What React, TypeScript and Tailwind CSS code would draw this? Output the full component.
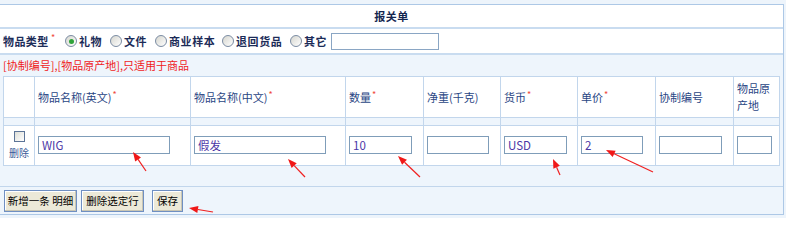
import React from "react";

const F = { fontFamily: '"Noto Sans CJK SC", "Liberation Sans", sans-serif' };

function Star() {
  return <span className="text-[#f04a3a] text-[9px] leading-none relative -top-[4px] ml-[1px]">*</span>;
}

function Radio({ checked, label, w }: { checked?: boolean; label: string; w: number }) {
  return (
    <span className="flex items-center shrink-0" style={{ width: w }}>
      <span className="w-[12px] h-[12px] rounded-full border border-[#7b8ca3] bg-gradient-to-br from-[#d6d6cf] to-white flex items-center justify-center mr-[2px]">
        {checked && <span className="w-[5px] h-[5px] rounded-full bg-[#2fa33a]" />}
      </span>
      <span className="font-bold text-[#1c2c58] tracking-[0.6px]">{label}</span>
    </span>
  );
}

function Inp({ w, v }: { w: number; v?: string }) {
  return (
    <div
      className="h-[18px] border border-[#7f9db9] bg-white text-[11.5px] leading-[16px] pl-[3px] text-[#4b36a6]"
      style={{ width: w }}
    >
      {v}
    </div>
  );
}

const cols = "grid grid-cols-[31px_156px_155px_78px_77px_77px_78px_78px_46px]";
const cell = "border-r border-b border-[#c2d6ec]";

function Arrow({ x1, y1, x2, y2 }: { x1: number; y1: number; x2: number; y2: number }) {
  const dx = x2 - x1, dy = y2 - y1;
  const len = Math.hypot(dx, dy);
  const ux = dx / len, uy = dy / len;
  const bx = x2 - ux * 9, by = y2 - uy * 9;
  const px = -uy * 3.5, py = ux * 3.5;
  return (
    <g>
      <line x1={x1} y1={y1} x2={bx} y2={by} stroke="#f02020" strokeWidth="1.2" />
      <polygon points={`${x2},${y2} ${bx + px},${by + py} ${bx - px},${by - py}`} fill="#f01818" />
    </g>
  );
}

const btn =
  "h-[22px] bg-[#ece9d8] border border-[#6f8fc2] shadow-[inset_-1px_-1px_0_#c9c6b4,inset_1px_1px_0_#fff]";

export default function App() {
  return (
    <div className="relative w-[786px] h-[218px] bg-[#edf4fb] pt-[4px] text-[11px]" style={F}>
      <div className="w-[784px] border-t border-r border-b border-[#adc8e6]">
        <div className="h-[24px] bg-white border-b-2 border-[#c9dcf0] flex items-center justify-center font-bold text-[#14264f] text-[11px] tracking-[0.5px]">
          报关单
        </div>
        <div className="h-[26px] bg-white border-b-2 border-[#c9dcf0] flex items-center pl-[3px]">
          <span className="font-bold text-[#1c2c58] w-[47px] shrink-0 tracking-[0.4px]">物品类型</span>
          <span className="w-[15px] shrink-0 flex">
            <Star />
          </span>
          <Radio checked label="礼物" w={45} />
          <Radio label="文件" w={45} />
          <Radio label="商业样本" w={67} />
          <Radio label="退回货品" w={68} />
          <Radio label="其它" w={41} />
          <div className="w-[108px] h-[17px] border border-[#8aa6c4] bg-white shrink-0" />
        </div>
        <div className="bg-[#eef5fc] border-b border-[#c2d6ec]">
          <div className="h-[21px] flex items-center pl-[3px] text-[#f01c1c]">[协制编号],[物品原产地],只适用于商品</div>
          <div className={`ml-[3px] w-[777px] border-l border-t border-[#c2d6ec] ${cols}`}>
            {["", "物品名称(英文)", "物品名称(中文)", "数量", "净重(千克)", "货币", "单价", "协制编号", "物品原产地"].map((h, i) => (
              <div key={i} className={`${cell} h-[41px] bg-white flex items-center pl-[3px] text-[#2a4684] leading-[17px]`}>
                <span>
                  {h}
                  {[1, 2, 3, 5, 6].includes(i) && <Star />}
                </span>
              </div>
            ))}
            {Array.from({ length: 9 }).map((_, i) => (
              <div key={"s" + i} className={`${cell} h-[8px] bg-[#eef5fc]`} />
            ))}
            <div className={`${cell} h-[40px] bg-white flex flex-col items-center pt-[5px]`}>
              <div className="w-[11px] h-[11px] border border-[#5c7497] bg-gradient-to-br from-[#dedfd8] to-white" />
              <div className="text-[10px] text-[#3b5a98] leading-[14px] mt-[4px]">删除</div>
            </div>
            {[
              [132, "WIG"],
              [132, "假发"],
              [63, "10"],
              [62, ""],
              [63, "USD"],
              [62, "2"],
              [63, ""],
              [35, ""],
            ].map(([w, v], i) => (
              <div key={"d" + i} className={`${cell} h-[40px] bg-white flex items-center pl-[3px] pb-[2px]`}>
                <Inp w={w as number} v={v as string} />
              </div>
            ))}
          </div>
          <div className="h-[20px]" />
        </div>
        <div className="h-[27px] bg-[#eef5fc] flex items-center pl-[4px] pt-[1px] gap-[4px] text-[10.5px] text-black">
          <button className={`${btn} w-[73px]`}>新增一条 明细</button>
          <button className={`${btn} w-[63px]`}>删除选定行</button>
          <button className={`${btn} w-[31px] ml-[4px]`}>保存</button>
        </div>
      </div>
      <svg className="absolute left-0 top-0 pointer-events-none" width="786" height="218">
        <Arrow x1={146} y1={171} x2={133} y2={152} />
        <Arrow x1={305} y1={177} x2={288} y2={159} />
        <Arrow x1={420} y1={177} x2={398} y2={156} />
        <Arrow x1={560} y1={175} x2={553} y2={159} />
        <Arrow x1={653} y1={172} x2={606} y2={150} />
        <Arrow x1={213} y1={212} x2={189} y2={208} />
      </svg>
    </div>
  );
}
